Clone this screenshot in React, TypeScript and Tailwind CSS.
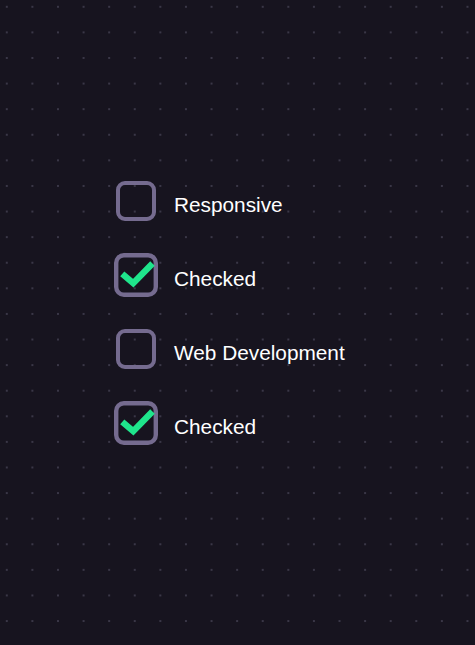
import { useState } from 'react';

type Item = { id: number; label: string; checked: boolean };

const initialItems: Item[] = [
    { id: 1, label: 'Responsive', checked: false },
    { id: 2, label: 'Checked', checked: true },
    { id: 3, label: 'Web Development', checked: false },
    { id: 4, label: 'Checked', checked: true },
];

function CheckRow({ item, onToggle }: { item: Item; onToggle: () => void }) {
    return (
        <label className="flex items-center gap-[18px] cursor-pointer select-none h-10">
            <span
                className={`relative block w-10 h-10 shrink-0 rounded-[9px] border-4 border-[#756b8f] transition-transform ${
                    item.checked ? 'scale-110' : ''
                }`}
                onClick={onToggle}
            >
                {item.checked && (
                    <svg
                        viewBox="0 0 40 40"
                        className="absolute -top-1 -left-1 w-10 h-10 overflow-visible"
                    >
                        <polyline
                            points="7.5,19 17.5,27.5 35,9.5"
                            fill="none"
                            stroke="#1fe58c"
                            strokeWidth="5.8"
                            strokeLinecap="butt"
                            strokeLinejoin="miter"
                        />
                    </svg>
                )}
            </span>
            <span className="mt-[8px] text-[20.8px] leading-none text-white">{item.label}</span>
        </label>
    );
}

export default function App() {
    const [items, setItems] = useState<Item[]>(initialItems);

    const toggle = (id: number) =>
        setItems(prev => prev.map(i => (i.id === id ? { ...i, checked: !i.checked } : i)));

    return (
        <main
            className="min-h-[645px] w-full bg-[#17141f] bg-[radial-gradient(circle,#3a3747_1px,transparent_1.2px)] bg-[size:25.6px_25.6px] bg-[position:-6px_-6px] pt-[181px] pl-[116px]"
            style={{ fontFamily: '"Liberation Sans", Arial, sans-serif' }}
        >
            <div className="flex flex-col gap-[34px]">
                {items.map(item => (
                    <CheckRow key={item.id} item={item} onToggle={() => toggle(item.id)} />
                ))}
            </div>
        </main>
    );
}
